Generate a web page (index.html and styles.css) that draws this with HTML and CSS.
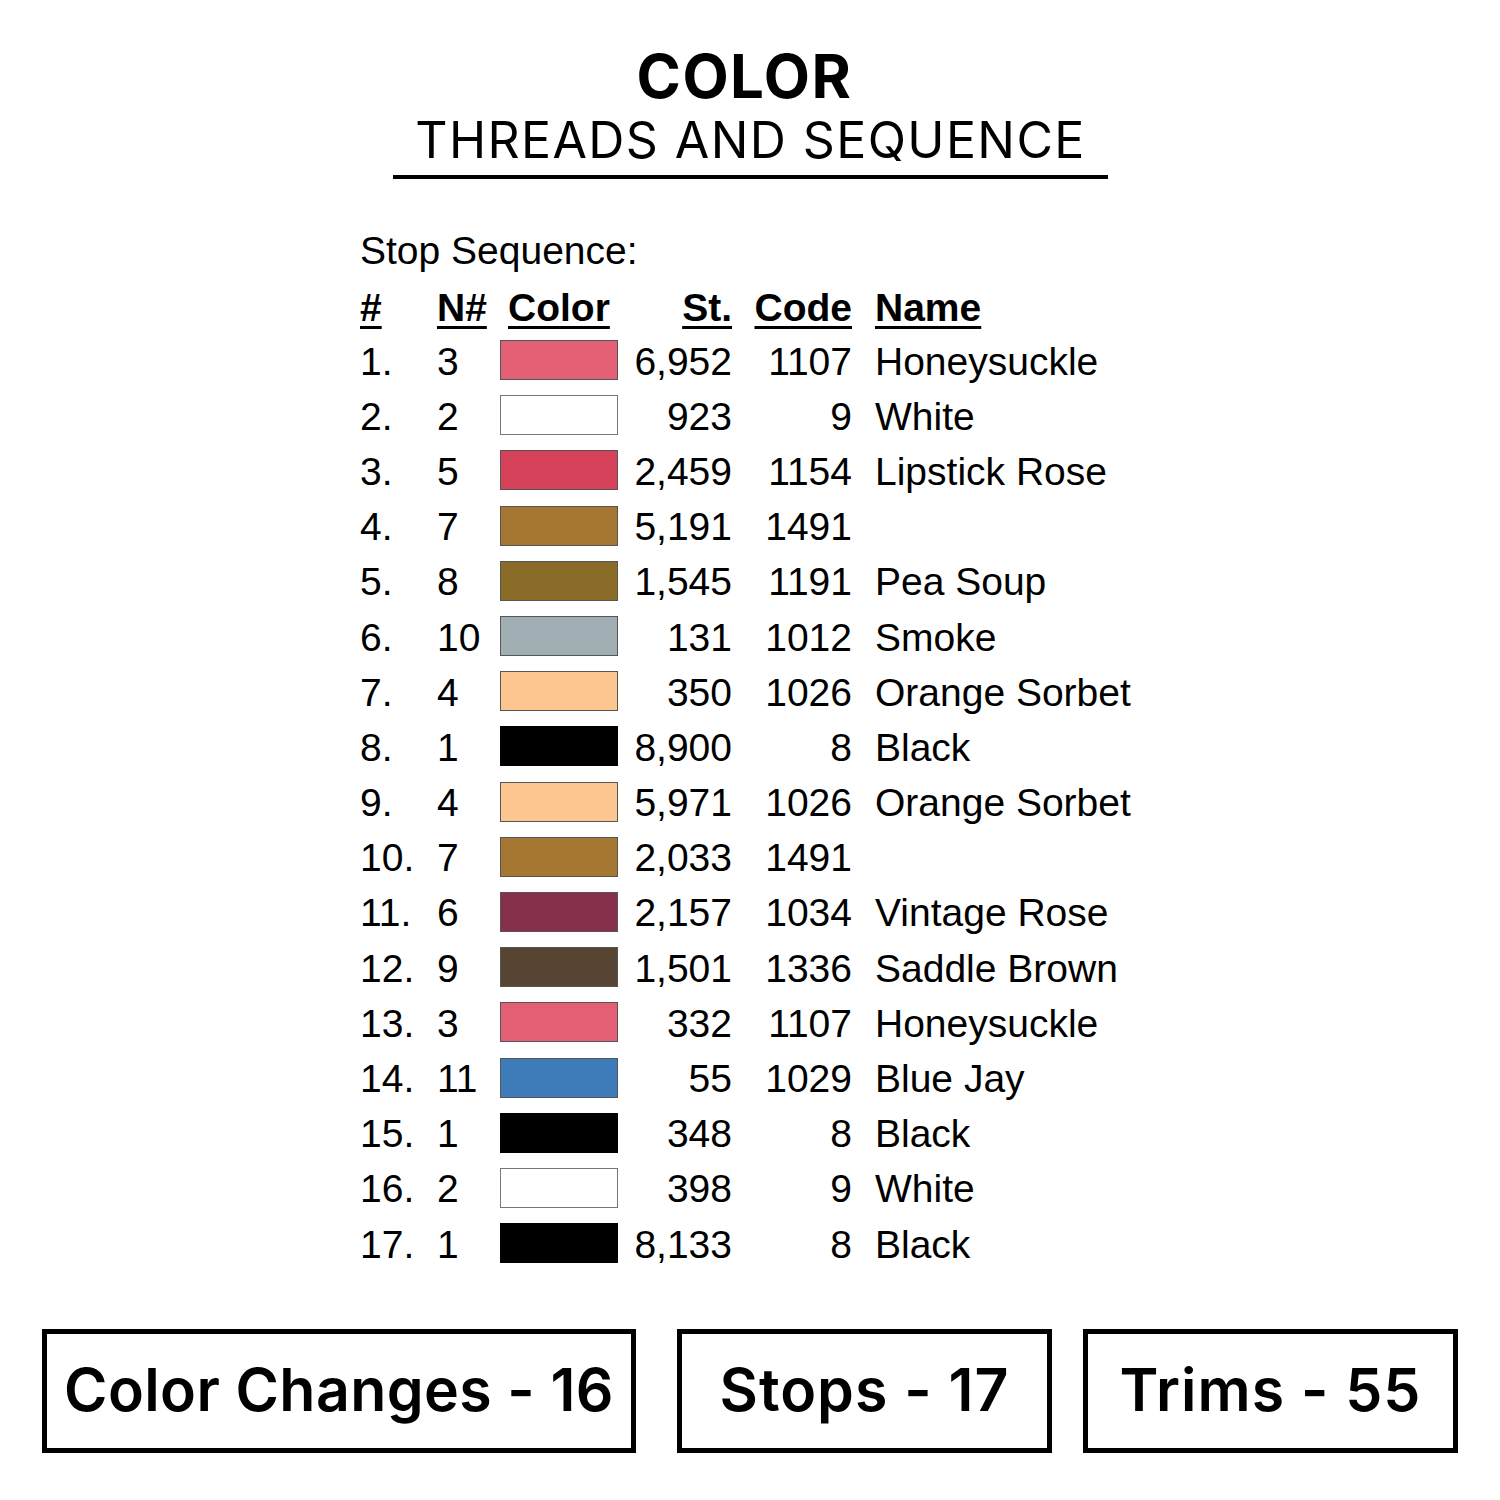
FILE: index.html
```html
<!DOCTYPE html>
<html>
<head>
<meta charset="utf-8">
<link rel="stylesheet" href="styles.css">
</head>
<body>
<div class="page">
  <header class="title">
    <div class="title-main">COLOR</div>
    <div class="title-sub">THREADS AND SEQUENCE</div>
  </header>

  <section class="seq">
    <div class="seq-label">Stop Sequence:</div>
    <div class="grid">
      <div class="h">#</div><div class="h">N#</div><div class="h hcolor">Color</div><div class="h r">St.</div><div class="h r">Code</div><div class="h name">Name</div>

      <div>1.</div><div>3</div><div class="cell-sw"><span class="sw c-honey"></span></div><div class="r">6,952</div><div class="r">1107</div><div class="name">Honeysuckle</div>
      <div>2.</div><div>2</div><div class="cell-sw"><span class="sw c-white"></span></div><div class="r">923</div><div class="r">9</div><div class="name">White</div>
      <div>3.</div><div>5</div><div class="cell-sw"><span class="sw c-lip"></span></div><div class="r">2,459</div><div class="r">1154</div><div class="name">Lipstick Rose</div>
      <div>4.</div><div>7</div><div class="cell-sw"><span class="sw c-gold"></span></div><div class="r">5,191</div><div class="r">1491</div><div class="name"></div>
      <div>5.</div><div>8</div><div class="cell-sw"><span class="sw c-pea"></span></div><div class="r">1,545</div><div class="r">1191</div><div class="name">Pea Soup</div>
      <div>6.</div><div>10</div><div class="cell-sw"><span class="sw c-smoke"></span></div><div class="r">131</div><div class="r">1012</div><div class="name">Smoke</div>
      <div>7.</div><div>4</div><div class="cell-sw"><span class="sw c-orange"></span></div><div class="r">350</div><div class="r">1026</div><div class="name">Orange Sorbet</div>
      <div>8.</div><div>1</div><div class="cell-sw"><span class="sw c-black"></span></div><div class="r">8,900</div><div class="r">8</div><div class="name">Black</div>
      <div>9.</div><div>4</div><div class="cell-sw"><span class="sw c-orange"></span></div><div class="r">5,971</div><div class="r">1026</div><div class="name">Orange Sorbet</div>
      <div>10.</div><div>7</div><div class="cell-sw"><span class="sw c-gold"></span></div><div class="r">2,033</div><div class="r">1491</div><div class="name"></div>
      <div>11.</div><div>6</div><div class="cell-sw"><span class="sw c-vintage"></span></div><div class="r">2,157</div><div class="r">1034</div><div class="name">Vintage Rose</div>
      <div>12.</div><div>9</div><div class="cell-sw"><span class="sw c-saddle"></span></div><div class="r">1,501</div><div class="r">1336</div><div class="name">Saddle Brown</div>
      <div>13.</div><div>3</div><div class="cell-sw"><span class="sw c-honey"></span></div><div class="r">332</div><div class="r">1107</div><div class="name">Honeysuckle</div>
      <div>14.</div><div>11</div><div class="cell-sw"><span class="sw c-blue"></span></div><div class="r">55</div><div class="r">1029</div><div class="name">Blue Jay</div>
      <div>15.</div><div>1</div><div class="cell-sw"><span class="sw c-black"></span></div><div class="r">348</div><div class="r">8</div><div class="name">Black</div>
      <div>16.</div><div>2</div><div class="cell-sw"><span class="sw c-white"></span></div><div class="r">398</div><div class="r">9</div><div class="name">White</div>
      <div>17.</div><div>1</div><div class="cell-sw"><span class="sw c-black"></span></div><div class="r">8,133</div><div class="r">8</div><div class="name">Black</div>
    </div>
  </section>

  <footer class="stats">
    <div class="box box-1">Color Changes - 16</div>
    <div class="box box-2">Stops - 17</div>
    <div class="box box-3">Trims - 55</div>
  </footer>
</div>
</body>
</html>
```

FILE: styles.css
```css
html, body {
  margin: 0;
  padding: 0;
  background: #fff;
}

.page {
  width: 1500px;
  height: 1500px;
  position: relative;
  color: #000;
  overflow: hidden;
}

.title {
  width: 715px;
  margin: 0 0 0 393px;
  padding-top: 43px;
  text-align: center;
  border-bottom: 4px solid #000;
  font-family: Inter, "Open Sans", sans-serif;
}

.title-main {
  font-size: 60px;
  font-weight: 700;
  line-height: 66px;
  letter-spacing: 1.5px;
  margin-left: -12px;
}

.title-sub {
  font-size: 50px;
  font-weight: 400;
  line-height: 62px;
  letter-spacing: 1.4px;
  padding-bottom: 4px;
}

.seq {
  padding-left: 360px;
  margin-top: 49px;
  font-family: "Liberation Sans", Arial, sans-serif;
  font-size: 39px;
}

.seq-label {
  line-height: 46px;
}

.grid {
  display: grid;
  grid-template-columns: 77px 63px 118px 114px 120px auto;
  grid-template-rows: 53px;
  grid-auto-rows: 55.2px;
  align-items: center;
  margin-top: 7px;
}

.grid > div {
  white-space: nowrap;
  line-height: 44px;
}

.h {
  font-weight: 700;
  text-decoration: underline;
  text-decoration-thickness: 3px;
  text-underline-offset: 5px;
}

.hcolor {
  padding-left: 8px;
}

.r {
  text-align: right;
}

.name {
  padding-left: 23px;
}

.cell-sw {
  display: flex;
  align-items: center;
}

.sw {
  display: block;
  width: 118px;
  height: 40px;
  box-sizing: border-box;
  border: 1.5px solid #555;
  margin-top: -3px;
}

.c-honey { background: #e25f74; }
.c-white { background: #ffffff; border-color: #777; }
.c-lip { background: #d6425a; }
.c-gold { background: #a67633; }
.c-pea { background: #8a6c28; }
.c-smoke { background: #a1afb4; }
.c-orange { background: #fdc58f; }
.c-black { background: #000000; border-color: #000; }
.c-vintage { background: #86304c; }
.c-saddle { background: #574433; }
.c-blue { background: #3d7cb8; }

.stats {
  position: absolute;
  left: 42px;
  top: 1329px;
  display: flex;
  font-family: Inter, "Open Sans", sans-serif;
  font-weight: 600;
  font-size: 59px;
  letter-spacing: 1px;
}

.box {
  box-sizing: border-box;
  height: 124px;
  border: 5px solid #000;
  display: flex;
  align-items: center;
  justify-content: center;
  padding-bottom: 4px;
}

.box-1 { width: 594px; letter-spacing: 0.4px; }
.box-2 { width: 375px; margin-left: 41px; }
.box-3 { width: 375px; margin-left: 31px; }
```
